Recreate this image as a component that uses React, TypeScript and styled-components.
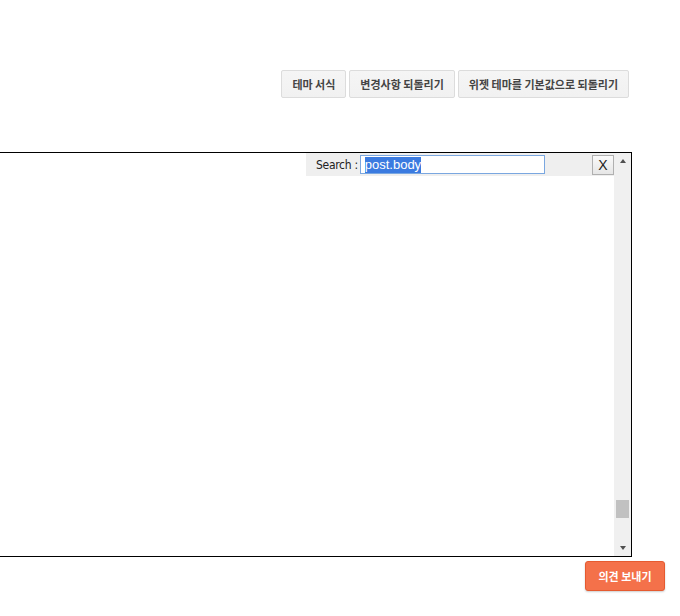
import React from "react";
import styled, { createGlobalStyle } from "styled-components";

const G = createGlobalStyle`
  body { margin: 0; background: #fff; font-family: "Noto Sans CJK KR", "Noto Sans", sans-serif; }
`;
const Page = styled.div`width: 680px; height: 616px; overflow: hidden; display: flex; flex-direction: column;`;
const Toolbar = styled.div`display: flex; justify-content: flex-end; gap: 3px; padding: 70px 51px 0 0;`;
const Btn = styled.button`
  height: 28px; padding: 0 ${(p: { $px: number }) => p.$px}px; border: 1px solid #dcdcdc; border-radius: 2px;
  background: linear-gradient(#f5f5f5, #f1f1f1); color: #444; font-size: 11px; font-weight: 700;
  font-family: "Noto Sans CJK KR", sans-serif; cursor: pointer;
`;
const Editor = styled.div`
  position: relative; margin: 54px 0 0 -1px; width: 631px; height: 403px; border: 1px solid #000; display: flex;
`;
const Content = styled.div`flex: 1;`;
const Scroll = styled.div`width: 17px; background: #f0f0f0; display: flex; flex-direction: column; align-items: center; justify-content: space-between; position: relative;`;
const Arrow = styled.div<{ $up?: boolean }>`
  width: 0; height: 0; margin: 6px 0; border-left: 3.5px solid transparent; border-right: 3.5px solid transparent;
  ${(p) => (p.$up ? "border-bottom: 4px solid #505050;" : "border-top: 4px solid #505050;")}
`;
const Thumb = styled.div`position: absolute; top: 347px; left: 2px; width: 13px; height: 18px; background: #c1c1c1;`;
const SearchBar = styled.div`
  position: absolute; top: 0; left: 306px; width: 308px; height: 23px; background: #efefef;
  display: flex; align-items: center; font-family: "DejaVu Sans Condensed", "Liberation Sans", sans-serif; font-size: 12px; color: #222;
`;
const Label = styled.span`margin-left: 10px; letter-spacing: -0.3px;`;
const Input = styled.div`
  margin-left: 2px; width: 179px; height: 17px; border: 1px solid #7aa7e0; background: #fff; display: flex; align-items: center; padding-left: 4px;
`;
const Sel = styled.span`background: #3b7be0; color: #fff; font-family: "Liberation Sans", sans-serif; font-size: 13px; line-height: 16px;`;
const XBtn = styled.div`
  margin-left: auto; width: 22px; height: 20px; border: 1px solid #b0b0b0; background: linear-gradient(#fafafa, #e6e6e6);
  display: flex; align-items: center; justify-content: center; font-size: 14px; font-family: "Liberation Sans", sans-serif; box-sizing: border-box;
`;
const Footer = styled.div`display: flex; justify-content: flex-end; padding: 4px 15px 0 0;`;
const Send = styled.button`
  height: 30px; width: 80px; border: 1px solid #e55a30; border-radius: 3px; background: #f4714a; color: #fff;
  font-size: 11px; font-weight: 700; font-family: "Noto Sans CJK KR", sans-serif; box-shadow: 0 1px 2px rgba(0,0,0,.2);
`;

export default function App() {
  return (
    <Page>
      <G />
      <Toolbar>
        <Btn $px={10}>테마 서식</Btn>
        <Btn $px={10}>변경사항 되돌리기</Btn>
        <Btn $px={10}>위젯 테마를 기본값으로 되돌리기</Btn>
      </Toolbar>
      <Editor>
        <Content />
        <Scroll>
          <Arrow $up />
          <Thumb />
          <Arrow />
        </Scroll>
        <SearchBar>
          <Label>Search :</Label>
          <Input><Sel>post.body</Sel></Input>
          <XBtn>X</XBtn>
        </SearchBar>
      </Editor>
      <Footer>
        <Send>의견 보내기</Send>
      </Footer>
    </Page>
  );
}
